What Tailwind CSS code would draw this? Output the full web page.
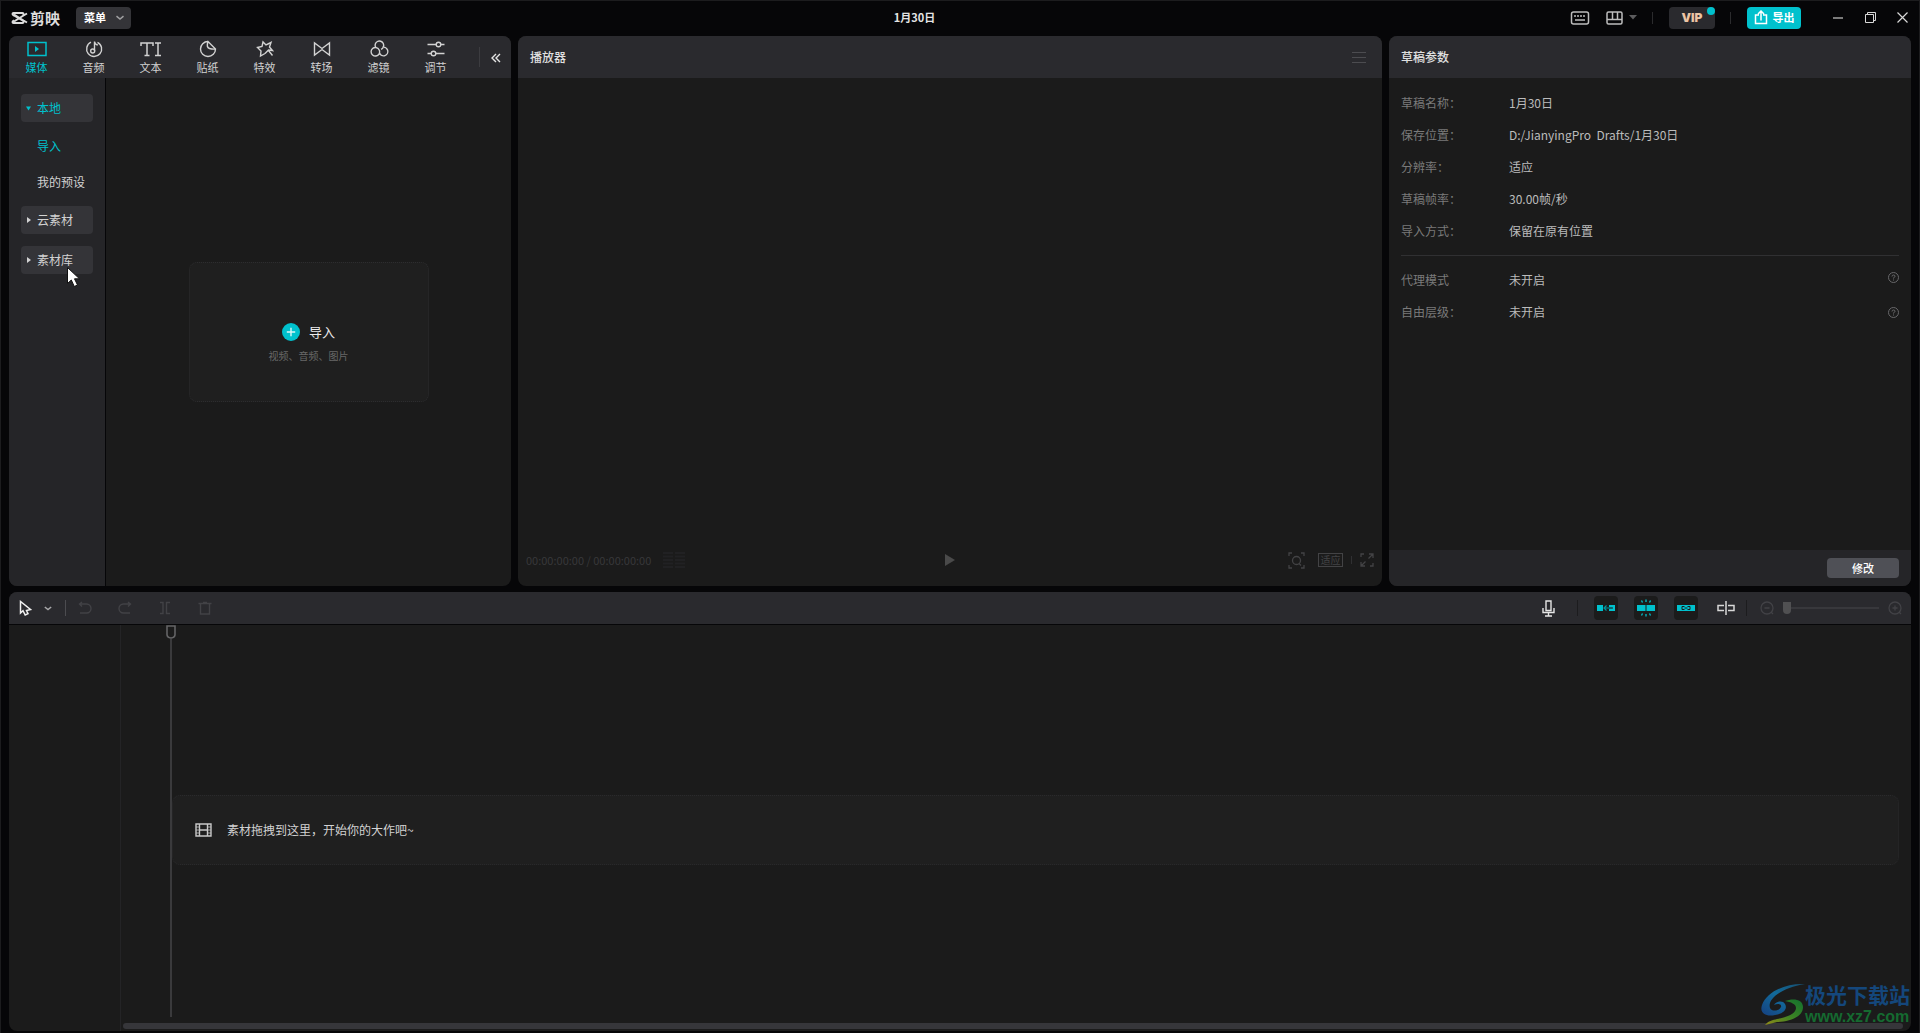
<!DOCTYPE html>
<html lang="zh-CN">
<head>
<meta charset="utf-8">
<meta name="viewport" content="width=device-width, initial-scale=1">
<title>剪映 - 1月30日</title>
<script src="https://cdn.jsdelivr.net/npm/@tailwindcss/browser@4"></script>
</head>
<body class="bg-[#060608] font-['Noto_Sans_CJK_SC',sans-serif] text-xs text-[#d2d2d2]">
<div class="relative grid h-screen min-h-[640px] min-w-[1280px] grid-rows-[35px_minmax(0,550fr)_minmax(0,445fr)] overflow-hidden border-x border-t border-[#1c1c1e] px-2 pb-[2px]">

  <!-- Title bar -->
  <header class="flex items-center pb-[2px]">
    <div class="flex items-center gap-[2px] pl-[2px] text-[#dcdcdc]">
      <svg width="17" height="14" viewBox="0 0 17 14" fill="none" stroke="currentColor" stroke-width="2"><path d="M16 2.500 12.500 4.500 3 10.500M16 11.500 12.500 9.500 3 3.500"/><path d="M12.500 4.500V3Q12.500 2 11.500 2H2.500Q1.500 2 1.500 3Q1.500 3.700 3 4.500L12.500 10V11Q12.500 12 11.500 12H2.500Q1.500 12 1.500 11Q1.500 10.300 3 9.500"/></svg>
      <span class="text-[15px] leading-5 font-bold">剪映</span>
    </div>
    <button type="button" class="ml-4 flex h-[22px] w-[55px] items-center justify-between rounded bg-[#343438] pr-[6px] pl-2 text-[11px] font-bold text-white">菜单
      <svg width="10" height="6" viewBox="0 0 10 6" fill="none" stroke="#a0a0a2" stroke-width="1.500"><path d="M1.500 1.200 5 4 8.500 1.200"/></svg>
    </button>
    <h1 class="ml-32 flex-1 text-center text-[11px] font-bold text-[#e4e4e4]">1月30日</h1>
    <div class="flex items-center text-[#bdbdbd]">
      <button type="button" aria-label="快捷键"><svg width="20" height="14" viewBox="0 0 20 14" fill="none" stroke="currentColor" stroke-width="1.500"><rect x="1.500" y="1" width="17" height="12" rx="2"/><path d="M4 5h2M7 5h2M10 5h2M13 5h2M5 9h10" stroke-width="1.300"/></svg></button>
      <button type="button" aria-label="布局" class="ml-4 flex items-center gap-[6px]"><svg width="17" height="14" viewBox="0 0 17 14" fill="none" stroke="currentColor" stroke-width="1.500"><rect x="1" y="1" width="15" height="12" rx="1.500"/><path d="M1 8.500h15M6.500 1v7.500M11.500 1v7.500"/></svg><svg width="8" height="5" viewBox="0 0 8 5" fill="#5c5c5e"><path d="M0 0h8L4 4.500z"/></svg></button>
      <span class="ml-[15px] h-3 w-px bg-[#2b2b2d]"></span>
      <button type="button" class="relative ml-4 h-[22px] w-[46px] rounded bg-[#2a2a2e] font-[Inter] text-[12px] font-black text-[#ecc4a4]">VIP<span class="absolute top-0 right-0 size-2 rounded-full bg-[#00c1cd]"></span></button>
      <span class="ml-[15px] h-3 w-px bg-[#2b2b2d]"></span>
      <button type="button" class="ml-4 flex h-[22px] w-[54px] items-center justify-center gap-[5px] rounded bg-[#00c1cd] text-[11px] font-bold text-white"><svg width="14" height="15" viewBox="0 0 14 15" fill="none" stroke="currentColor" stroke-width="1.500"><path d="M5 5H1.500v8.500h11V5H9M7 10.500V1.500M4 4l3-3 3 3"/></svg>导出</button>
      <button type="button" aria-label="最小化" class="ml-8 h-[2px] w-[10px] bg-[#7a7a7a]"></button>
      <button type="button" aria-label="还原" class="ml-[22px]"><svg width="11" height="11" viewBox="0 0 11 11" fill="none" stroke="#d8d8d8"><path d="M.5 2.500h8v8h-8zM2.500 2.500v-2h8v8h-2"/></svg></button>
      <button type="button" aria-label="关闭" class="mr-[3px] ml-[21px]"><svg width="11" height="11" viewBox="0 0 11 11" fill="none" stroke="#d8d8d8" stroke-width="1.200"><path d="m.5.5 10 10M10.500.5l-10 10"/></svg></button>
    </div>
  </header>

  <main class="grid min-h-0 grid-cols-[502px_minmax(0,1fr)_522px] gap-[7px]">
    <!-- Media panel -->
    <section class="flex min-h-0 flex-col overflow-hidden rounded-lg bg-[#1b1b1b]">
      <nav class="flex h-[42px] shrink-0 items-center bg-[#2a2a2e] text-[11px] leading-4">
        <button type="button" class="flex w-[57px] flex-col items-center pr-[2px] text-[#00c1cd]"><svg width="20" height="20" viewBox="0 0 20 20" fill="none" stroke="currentColor" stroke-width="1.500"><path d="M1 3.500h18v13H1z"/><path d="M8 7v6l4-3z" fill="currentColor" stroke="none"/></svg>媒体</button>
        <button type="button" class="flex w-[57px] flex-col items-center pr-[2px]"><svg width="20" height="20" viewBox="0 0 20 20" fill="none" stroke="currentColor" stroke-width="1.400"><path d="M13.500 3.300A7.500 7.500 0 1 1 7 3.200M10.500 12V2.500q.3 3 3.300 3.500"/><circle cx="8.700" cy="12" r="2"/></svg>音频</button>
        <button type="button" class="flex w-[57px] flex-col items-center pr-[2px]"><svg width="22" height="20" viewBox="0 0 22 20" fill="none" stroke="currentColor" stroke-width="1.500"><path d="M1 7V4h12v3M7 4v12.500M4.500 16.500h5M15 4h6M15 16.500h6M18 4v12.500"/></svg>文本</button>
        <button type="button" class="flex w-[57px] flex-col items-center pr-[2px]"><svg width="20" height="20" viewBox="0 0 20 20" fill="none" stroke="currentColor" stroke-width="1.400"><path d="M10 2.500a7.500 7.500 0 1 0 7.500 7.500L10 2.500q-2 6 1.500 7t6 .5"/></svg>贴纸</button>
        <button type="button" class="flex w-[57px] flex-col items-center pr-[2px]"><svg width="20" height="20" viewBox="0 0 20 20" fill="none" stroke="currentColor" stroke-width="1.400"><path d="M10 14.500 5.500 17 6 12 2.500 8.500l4.500-1L8 3l3 3 5-2.500-1.500 4.500 3 3.500-4-.5L10 14.500M13.500 11.500l4 5"/></svg>特效</button>
        <button type="button" class="flex w-[57px] flex-col items-center pr-[2px]"><svg width="20" height="20" viewBox="0 0 20 20" fill="none" stroke="currentColor" stroke-width="1.400"><path d="M2.500 4v12L10 10.500 17.500 16V4L10 9.500z"/></svg>转场</button>
        <button type="button" class="flex w-[57px] flex-col items-center pr-[2px]"><svg width="20" height="20" viewBox="0 0 20 20" fill="none" stroke="currentColor" stroke-width="1.400"><path d="M6.700 8.500A4.300 4.300 0 1 1 12 10.300M10.500 11.500A4.300 4.300 0 1 1 7 8.500q2.500.5 3.500 3M13.500 8.300A4.300 4.300 0 1 1 10.500 14"/></svg>滤镜</button>
        <button type="button" class="flex w-[57px] flex-col items-center pr-[2px]"><svg width="20" height="20" viewBox="0 0 20 20" fill="none" stroke="currentColor" stroke-width="1.400"><path d="M1.500 5.500h8.500M15 5.500h3.500M1.500 14.500H5M10 14.500h8.500"/><circle cx="12.500" cy="5.500" r="2.300"/><circle cx="7.500" cy="14.500" r="2.300"/></svg>调节</button>
        <span class="ml-[14px] h-5 w-px bg-[#3c3c40]"></span>
        <button type="button" aria-label="收起" class="ml-[11px] pt-[2px]"><svg width="10" height="10" viewBox="0 0 10 10" fill="none" stroke="#e4e4e4" stroke-width="1.400"><path d="M5 1 1 5l4 4M9 1 5 5l4 4"/></svg></button>
      </nav>
      <div class="flex min-h-0 flex-1">
        <aside class="flex w-[97px] flex-col border-r border-[#060608] bg-[#252528] px-3 pt-4">
          <button type="button" class="flex h-7 w-[72px] shrink-0 items-center gap-[6px] rounded bg-[#343438] pl-[5px] text-[#00c1cd]"><svg width="5" height="5" viewBox="0 0 5 5" fill="currentColor"><path d="M0 .5h5l-2.500 4z"/></svg>本地</button>
          <a href="#import" class="mt-[6px] flex h-9 items-center pl-4 text-[#00c1cd]">导入</a>
          <a href="#presets" class="flex h-9 items-center pl-4">我的预设</a>
          <button type="button" class="mt-[6px] flex h-7 w-[72px] shrink-0 items-center gap-[6px] rounded bg-[#343438] pl-[5px]"><svg width="5" height="6" viewBox="0 0 5 6" fill="currentColor"><path d="M1 0v6l4-3z"/></svg>云素材</button>
          <button type="button" class="mt-3 flex h-7 w-[72px] shrink-0 items-center gap-[6px] rounded bg-[#343438] pl-[5px]"><svg width="5" height="6" viewBox="0 0 5 6" fill="currentColor"><path d="M1 0v6l4-3z"/></svg>素材库</button>
        </aside>
        <div class="flex flex-1 items-center justify-center">
          <button type="button" class="flex h-[140px] w-[240px] flex-col items-center rounded-lg border border-dotted border-[#2d2d2f] bg-[#1f1f1f] pt-[59px]">
            <span class="flex h-5 items-center gap-[9px] text-[13px] text-[#ececec]"><svg width="18" height="18" viewBox="0 0 18 18"><circle cx="9" cy="9" r="9" fill="#00c1cd"/><path d="M9 4.800v8.400M4.800 9h8.400" stroke="#d9f6f8" stroke-width="1.400"/></svg>导入</span>
            <span class="mt-[6px] text-[10px] leading-4 text-[#686868]">视频、音频、图片</span>
          </button>
        </div>
      </div>
    </section>

    <!-- Player -->
    <section class="flex min-h-0 flex-col overflow-hidden rounded-lg bg-[#1b1b1b]">
      <div class="flex h-[42px] shrink-0 items-center justify-between bg-[#2a2a2e] pr-4 pl-3">
        <h2 class="font-medium text-[#e0e0e0]">播放器</h2>
        <button type="button" aria-label="播放器菜单"><svg width="14" height="12" viewBox="0 0 14 12" stroke="#4c4c50"><path d="M0 1.500h14M0 6.500h14M0 11.500h14"/></svg></button>
      </div>
      <div class="flex-1"></div>
      <div class="grid h-[52px] shrink-0 grid-cols-[1fr_auto_1fr] items-center pr-2 pl-2 text-[#38383a]">
        <div class="flex items-center gap-3 text-[11px]"><span>00:00:00:00 / 00:00:00:00</span>
          <svg width="22" height="16" viewBox="0 0 22 16" stroke="#212123" stroke-width="2"><path d="M0 1h10M0 4.500h10M0 8h10M0 11.500h10M0 15h10M12 1h10M12 4.500h10M12 8h10M12 11.500h10M12 15h10"/></svg>
        </div>
        <button type="button" aria-label="播放"><svg width="10" height="12" viewBox="0 0 10 12" fill="#4a4a4a"><path d="M0 0v12l10-6z"/></svg></button>
        <div class="flex items-center justify-end text-[#434345]">
          <button type="button" aria-label="缩放"><svg width="17" height="17" viewBox="0 0 17 17" fill="none" stroke="currentColor" stroke-width="1.300"><path d="M4 1H1v3M13 1h3v3M4 16H1v-3M13 16h3v-3M11 11.500l2 2"/><circle cx="8.500" cy="8.500" r="4"/></svg></button>
          <button type="button" class="ml-[13px] h-[14px] w-[25px] border border-current text-[10px] leading-3">适应</button>
          <span class="ml-2 h-2 w-px bg-[#303032]"></span>
          <button type="button" aria-label="全屏" class="ml-2"><svg width="14" height="14" viewBox="0 0 14 14" fill="none" stroke="currentColor" stroke-width="1.300"><path d="M4 1H1v3M10 13h3v-3M9 1h4v4M13 1 8.500 5.500M5 13H1V9M1 13l4.500-4.500"/></svg></button>
        </div>
      </div>
    </section>

    <!-- Draft details -->
    <section class="flex min-h-0 flex-col overflow-hidden rounded-lg bg-[#1b1b1b]">
      <div class="flex h-[42px] shrink-0 items-center bg-[#2a2a2e] px-3"><h2 class="font-medium text-[#e0e0e0]">草稿参数</h2></div>
      <div class="min-h-0 flex-1 px-3 pt-[9px] text-[#bcbcbc]">
        <dl class="grid auto-rows-[32px] grid-cols-[108px_1fr] items-center border-b border-[#303032] pb-2 [&>dt]:text-[#7a7a7a]">
          <dt>草稿名称：</dt><dd>1月30日</dd>
          <dt>保存位置：</dt><dd>D:/JianyingPro&nbsp; Drafts/1月30日</dd>
          <dt>分辨率：</dt><dd>适应</dd>
          <dt>草稿帧率：</dt><dd>30.00帧/秒</dd>
          <dt>导入方式：</dt><dd>保留在原有位置</dd>
        </dl>
        <dl class="mt-2 grid auto-rows-[32px] grid-cols-[108px_1fr] items-center [&>dt]:text-[#7a7a7a]">
          <dt>代理模式</dt>
          <dd class="flex items-center justify-between">未开启<svg class="mb-[6px]" width="11" height="11" viewBox="0 0 11 11" fill="none" stroke="#68686a"><circle cx="5.500" cy="5.500" r="5"/><path d="M4 4.500q0-1.500 1.500-1.500T7 4.300q0 .9-1.500 1.500v.7M5.500 7.500v1"/></svg></dd>
          <dt>自由层级：</dt>
          <dd class="flex items-center justify-between">未开启<svg width="11" height="11" viewBox="0 0 11 11" fill="none" stroke="#68686a"><circle cx="5.500" cy="5.500" r="5"/><path d="M4 4.500q0-1.500 1.500-1.500T7 4.300q0 .9-1.500 1.500v.7M5.500 7.500v1"/></svg></dd>
        </dl>
      </div>
      <div class="flex h-9 shrink-0 items-center justify-end bg-[#252528] px-3"><button type="button" class="h-5 w-[72px] rounded bg-[#4f5056] text-[11px] font-medium text-white">修改</button></div>
    </section>
  </main>

  <!-- Timeline -->
  <section class="mt-[6px] flex min-h-0 flex-col overflow-hidden rounded-lg bg-[#1b1b1b]">
    <div class="flex h-[33px] shrink-0 items-center justify-between border-b border-[#060608] bg-[#2a2a2e] pr-[9px] pl-[10px]">
      <div class="flex items-center text-[#424246]">
        <button type="button" aria-label="选择" class="flex items-center gap-3"><svg width="13" height="16" viewBox="0 0 13 16" fill="none" stroke="#f0f0f0" stroke-width="1.500"><path d="M1.500 1.500v11.500l2.500-2.300 2.200 4.300 2.800-1.300-1.500-3.200 4-1z"/></svg><svg width="8" height="5" viewBox="0 0 8 5" fill="none" stroke="#a8a8aa" stroke-width="1.500"><path d="m.8 1 3.200 2.500L7.200 1"/></svg></button>
        <span class="ml-[13px] h-4 w-px bg-[#4c4c50]"></span>
        <button type="button" aria-label="撤销" class="ml-3"><svg width="14" height="14" viewBox="0 0 14 14" fill="none" stroke="currentColor" stroke-width="1.400"><path d="M4 1 1.500 3 4 5.500M1.500 3H8.500a4.500 4.500 0 0 1 0 9H2"/></svg></button>
        <button type="button" aria-label="重做" class="ml-[26px]"><svg width="14" height="14" viewBox="0 0 14 14" fill="none" stroke="currentColor" stroke-width="1.400"><path d="M10 1l2.500 2L10 5.500M12.500 3H5.500a4.500 4.500 0 0 0 0 9H12"/></svg></button>
        <button type="button" aria-label="分割" class="ml-[26px]"><svg width="14" height="14" viewBox="0 0 14 14" fill="none" stroke="currentColor" stroke-width="1.400"><path d="M2 1.500h3v11H2M12 1.500H8.500v11H12"/></svg></button>
        <button type="button" aria-label="删除" class="ml-[26px]"><svg width="14" height="14" viewBox="0 0 14 14" fill="none" stroke="currentColor" stroke-width="1.400"><path d="M.5 2.500h13M5 1.500h4M2.500 2.500v10.500h9V2.500"/></svg></button>
      </div>
      <div class="flex items-center">
        <button type="button" aria-label="录音"><svg width="13" height="17" viewBox="0 0 13 17" fill="none" stroke="#e6e6e6" stroke-width="1.400"><path d="M4 1h5v9.500H4zM1 8v4.500h11V8M6.500 12.500V16M3 16h7"/></svg></button>
        <span class="ml-[22px] h-4 w-px bg-[#1c1c1e]"></span>
        <button type="button" aria-label="主轨磁吸" class="ml-4 flex size-6 items-center justify-center rounded bg-[#1b1b1b]"><svg width="18" height="8" viewBox="0 0 18 8"><path d="M0 1h6v6H0zM12 1h6v6h-6z" fill="#00c1cd"/><path d="M7 4h8M9.500 1.500 7 4l2.500 2.500" fill="none" stroke="#00959e" stroke-width="1.200"/><path d="M12 4h4" stroke="#1b1b1b"/></svg></button>
        <button type="button" aria-label="自动吸附" class="ml-4 flex size-6 items-center justify-center rounded bg-[#1b1b1b]"><svg width="18" height="18" viewBox="0 0 18 18"><path d="M0 6h8.500v6H0zM9.500 6H18v6H9.500z" fill="#00c1cd"/><path d="M9 .5V3M4.500 1.500l1 2M13.500 1.500l-1 2M9 15v2.500M4.500 16.500l1-2M13.500 16.500l-1-2" stroke="#00c1cd" stroke-width="1.300"/></svg></button>
        <button type="button" aria-label="联动" class="ml-4 flex size-6 items-center justify-center rounded bg-[#1b1b1b]"><svg width="18" height="8" viewBox="0 0 18 8"><path d="M0 1h18v6H0z" fill="#00c1cd"/><path d="M7.500 2.500H5v3h2.500M10.500 2.500H13v3h-2.500M7.500 4h3" fill="none" stroke="#1b1b1b"/></svg></button>
        <button type="button" aria-label="预览轴" class="ml-[19px]"><svg width="18" height="14" viewBox="0 0 18 14" fill="none" stroke="#d8d8d8" stroke-width="1.500"><path d="M7 4.500H1v5h6M11 4.500h6v5h-6M9 0v14"/></svg></button>
        <span class="ml-[11px] h-4 w-px bg-[#1c1c1e]"></span>
        <button type="button" aria-label="缩小" class="ml-[13px]"><svg width="14" height="14" viewBox="0 0 14 14" fill="none" stroke="#424246" stroke-width="1.300"><circle cx="7" cy="7" r="6"/><path d="M4.500 7h5M11 11l2 2"/></svg></button>
        <input type="range" min="0" max="100" value="0" aria-label="时间线缩放" class="ml-[9px] h-3 w-[96px] appearance-none bg-transparent bg-[linear-gradient(#38383c,#38383c)] bg-[length:100%_2px] bg-center bg-no-repeat [&::-webkit-slider-thumb]:h-3 [&::-webkit-slider-thumb]:w-2 [&::-webkit-slider-thumb]:appearance-none [&::-webkit-slider-thumb]:rounded-b [&::-webkit-slider-thumb]:bg-[#505052]">
        <button type="button" aria-label="放大" class="ml-[9px]"><svg width="14" height="14" viewBox="0 0 14 14" fill="none" stroke="#424246" stroke-width="1.300"><circle cx="7" cy="7" r="6"/><path d="M4.500 7h5M7 4.500v5M11 11l2 2"/></svg></button>
      </div>
    </div>
    <div class="flex min-h-0 flex-1">
      <div class="w-28 shrink-0 border-r border-[#242426]"></div>
      <div class="relative flex flex-1 items-center pt-1 pr-3 pl-[51px]">
        <div class="flex h-[70px] flex-1 items-center gap-[15px] rounded-lg border border-dotted border-[#2a2a2c] bg-[#1f1f1f] pl-[22px] text-[#d2d2d2]">
          <svg width="17" height="14" viewBox="0 0 17 14" fill="none" stroke="#c8c8c8" stroke-width="1.400"><path d="M1 1h15v12H1zM4.500 1v12M12.500 1v12M4.500 7h8"/><path d="M1 4h3M1 7h3M1 10h3M13 4h3M13 7h3M13 10h3" stroke-width=".8"/></svg>
          <p>素材拖拽到这里，开始你的大作吧~</p>
        </div>
        <!-- Playhead -->
        <div class="absolute top-0 bottom-[14px] left-[45px] flex w-[10px] flex-col items-center">
          <svg class="shrink-0" width="10" height="14" viewBox="0 0 10 14" fill="none" stroke="#646466" stroke-width="1.600"><path d="M1 1h8v8.500q0 3-4 3.500-4-.5-4-3.500z"/></svg>
          <span class="w-[2px] flex-1 bg-[#3a3a3c]"></span>
        </div>
        <div class="absolute right-2 bottom-[2px] left-[2px] h-[6px] rounded-full bg-[#36363a]"></div>
      </div>
    </div>
  </section>

  <!-- Site watermark -->
  <div class="absolute right-[9px] bottom-[6px] flex items-center">
    <svg width="44" height="42" viewBox="0 0 44 42">
      <defs>
        <linearGradient id="blue" x1="1" y1="0" x2="0" y2="1"><stop offset="0" stop-color="#174f70"/><stop offset=".5" stop-color="#126a9a"/><stop offset="1" stop-color="#164080"/></linearGradient>
        <linearGradient id="green" x1="1" y1="0" x2="0" y2="1"><stop offset="0" stop-color="#12702e"/><stop offset=".5" stop-color="#3d8424"/><stop offset="1" stop-color="#938a18"/></linearGradient>
      </defs>
      <path d="M44 1C26 0 6 8 1 22c-3 9 5 12 13 10 8-1 13-6 10-11-2-4-9-3-11 1 4-2 8-1 7 2-2 4-9 5-11 1C6 16 20 5 44 1z" fill="url(#blue)"/>
      <path d="M24 18c8-3 18-2 18 6 0 10-14 15-26 15l-12 3c3-4 8-5 12-6 12-2 19-6 19-11 0-4-5-6-11-7z" fill="url(#green)"/>
    </svg>
    <div class="flex flex-col items-start">
      <span class="text-[21px] leading-[26px] font-bold text-[#14477c]">极光下载站</span>
      <span class="font-['Liberation_Sans'] text-[16px] leading-5 font-bold text-[#156a30]">www.xz7.com</span>
    </div>
  </div>

  <!-- Mouse pointer -->
  <svg class="pointer-events-none absolute top-[265px] left-[65px]" width="15" height="22" viewBox="0 0 15 22" fill="#fff" stroke="#111"><path d="M1.500 1.500v16l3.800-3.500 3 6.500 3.200-1.500-3-6.200h5z"/></svg>
</div>
</body>
</html>
